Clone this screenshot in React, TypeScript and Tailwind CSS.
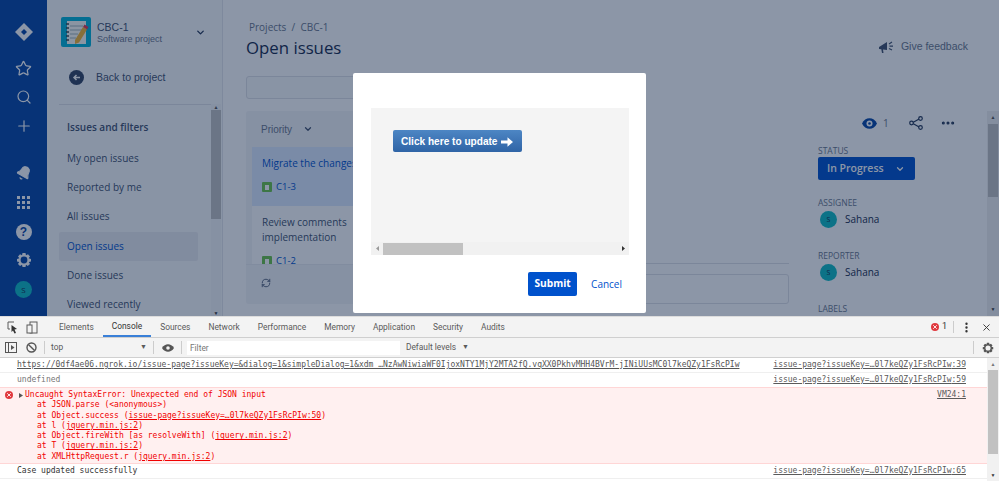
import { Bell, ChevronDown, Ellipsis, Plus, RefreshCw, Search, Star, X } from 'lucide-react';

const SANS = 'font-["Open_Sans","Noto_Sans",sans-serif]';
const ARIAL = 'font-["Liberation_Sans",Arial,sans-serif]';
const DEVTOOLS = 'font-["Roboto","Open_Sans",sans-serif]';

const NAV_LINKS = ['My open issues', 'Reported by me', 'All issues', 'Open issues', 'Done issues', 'Viewed recently'];
const TABS = ['Elements', 'Console', 'Sources', 'Network', 'Performance', 'Memory', 'Application', 'Security', 'Audits'];

function JiraLogo() {
  return (
    <svg width="20" height="20" viewBox="0 0 20 20">
      <path d="M10 1 L19 10 L10 19 L1 10 Z" fill="#ffffff" />
      <path d="M10 7 L13 10 L10 13 L7 10 Z" fill="#0747a6" />
    </svg>
  );
}

function Gear({ fill, hole }: { fill: string; hole: string }) {
  return (
    <svg width="16" height="16" viewBox="0 0 16 16">
      <path d="M6.5 1 H9.5 L10 3.2 L12 2.2 L14 4.5 L12.6 6.2 L15 7 V9.5 L12.8 10 L14 12 L11.8 14 L10 12.8 L9.5 15 H6.5 L6 12.8 L4 14 L2 12 L3.2 10 L1 9.5 V7 L3.4 6.2 L2 4.5 L4 2.2 L6 3.2 Z" fill={fill} />
      <circle cx="8" cy="8" r="3.4" fill={hole} />
    </svg>
  );
}

function Rail() {
  return (
    <div className="w-[47px] shrink-0 bg-[#0747a6] flex flex-col items-center text-white">
      <div className="mt-[22px]">
        <JiraLogo />
      </div>
      <Star size={17} strokeWidth={1.8} className="mt-[18px]" />
      <Search size={16} strokeWidth={1.8} className="mt-[12px]" />
      <Plus size={18} strokeWidth={1.6} className="mt-[12px]" />
      <Bell size={16} strokeWidth={1.5} fill="currentColor" className="mt-[30px] rotate-[30deg]" />
      <svg width="13" height="13" viewBox="0 0 13 13" className="mt-[15px]" fill="#ffffff">
        <rect x="0" y="0" width="3" height="3" />
        <rect x="5" y="0" width="3" height="3" />
        <rect x="10" y="0" width="3" height="3" />
        <rect x="0" y="5" width="3" height="3" />
        <rect x="5" y="5" width="3" height="3" />
        <rect x="10" y="5" width="3" height="3" />
        <rect x="0" y="10" width="3" height="3" />
        <rect x="5" y="10" width="3" height="3" />
        <rect x="10" y="10" width="3" height="3" />
      </svg>
      <div className={`mt-[15px] w-[16px] h-[16px] rounded-full bg-white text-[#0747a6] text-[12px] leading-[16px] font-bold text-center ${ARIAL}`}>?</div>
      <div className="mt-[12px] h-[16px]">
        <Gear fill="#ffffff" hole="#0747a6" />
      </div>
      <div className={`mt-[13px] w-[17px] h-[17px] rounded-full bg-[#10bcc4] text-[#172b4d] text-[8px] leading-[17px] text-center ${SANS}`}>S</div>
    </div>
  );
}

function ProjectIcon() {
  return (
    <svg width="30" height="30" viewBox="0 0 30 30" className="shrink-0 rounded-[2px]">
      <rect width="30" height="30" fill="#00b4d8" />
      <rect x="6" y="4" width="19" height="23" fill="#fdfdf5" />
      <path d="M9 9 H22 M9 13 H22 M9 17 H17 M9 21 H15" stroke="#9fb4b8" strokeWidth="1" />
      <path d="M5 7 H8 M5 11 H8 M5 15 H8 M5 19 H8 M5 23 H8" stroke="#37474f" strokeWidth="1.4" />
      <path d="M14 23 L22 10 L26 12.5 L18 25.5 L14 27 Z" fill="#f5b731" />
      <path d="M22 10 L23.5 7.5 L27.5 10 L26 12.5 Z" fill="#e53950" />
    </svg>
  );
}

function Sidebar() {
  return (
    <div className="w-[176px] shrink-0 bg-[#fafbfc] border-r border-[#e4e7ec] flex flex-col overflow-hidden">
      <div className={`flex items-center pl-[14px] pr-[16px] pt-[17px] ${ARIAL}`}>
        <ProjectIcon />
        <div className="ml-[6px] flex-1 pt-[2px]">
          <div className="text-[10.5px] leading-[11px] text-[#42526e]">CBC-1</div>
          <div className="text-[9px] leading-[12px] text-[#6b778c]">Software project</div>
        </div>
        <ChevronDown size={11} strokeWidth={3} className="text-[#253858]" />
      </div>
      <div className={`flex items-center pl-[22px] mt-[23px] ${ARIAL}`}>
        <div className="w-[15px] h-[15px] rounded-full bg-[#344563] flex items-center justify-center">
          <svg width="9" height="9" viewBox="0 0 9 9">
            <path d="M8 4.5 H2 M4.5 2 L2 4.5 L4.5 7" stroke="#ffffff" strokeWidth="1.5" fill="none" />
          </svg>
        </div>
        <span className="ml-[12px] text-[10.5px] text-[#42526e]">Back to project</span>
      </div>
      <div className="flex flex-1 min-h-0 mt-[18px] mr-[1px]">
        <div className="flex-1 min-w-0">
          <div className="ml-[12px] h-px bg-[#dfe1e6]" />
          <div className={`pl-[20px] pt-[15px] pb-[10px] text-[10px] leading-[14px] font-semibold text-[#42526e] ${SANS}`}>Issues and filters</div>
          <div className={`pl-[12px] pr-[13px] ${SANS}`}>
            {NAV_LINKS.map((link) => (
              <div
                key={link}
                className={`h-[29.3px] pl-[8px] flex items-center text-[10px] rounded-[2px] ${
                  link === 'Open issues' ? 'bg-[#ebecf0] text-[#0052cc]' : 'text-[#42526e]'
                }`}
              >
                {link}
              </div>
            ))}
          </div>
        </div>
        <div className="w-[10px] bg-[#f4f5f7] flex flex-col items-center">
          <div className="h-[6px] text-[5px] leading-[6px] text-[#555]">▲</div>
          <div className="w-full h-[109px] bg-[#c1c1c1]" />
          <div className="flex-1" />
          <div className="h-[6px] text-[5px] leading-[6px] text-[#333]">▼</div>
        </div>
      </div>
    </div>
  );
}

function IssueCard({ selected, title, issueKey }: { selected: boolean; title: string[]; issueKey: string }) {
  return (
    <div className={`pl-[10px] pr-[9px] pt-[9px] h-[59px] overflow-hidden ${selected ? 'bg-[#deebff]' : 'bg-white'} ${SANS}`}>
      {title.map((line) => (
        <div key={line} className={`text-[10px] leading-[15px] whitespace-nowrap ${selected ? 'text-[#0052cc]' : 'text-[#42526e]'}`}>
          {line}
        </div>
      ))}
      <div className="flex items-center mt-[10px]">
        <div className="w-[10px] h-[10px] rounded-[1px] bg-[#6bc44a] flex items-center justify-center">
          <div className="w-[4px] h-[5px] bg-white" />
        </div>
        <span className="ml-[4px] text-[9.5px] leading-[12px] text-[#0052cc]">{issueKey}</span>
      </div>
    </div>
  );
}

function PersonField({ label }: { label: string }) {
  return (
    <div className="h-[53px]">
      <div className={`text-[8.5px] leading-[11px] text-[#6b778c] ${SANS}`}>{label}</div>
      <div className="flex items-center mt-[3px] pl-[2px]">
        <div className={`w-[17px] h-[17px] rounded-full bg-[#10bcc4] text-[#172b4d] text-[7px] leading-[17px] text-center ${SANS}`}>S</div>
        <span className={`ml-[8px] text-[10px] text-[#172b4d] ${SANS}`}>Sahana</span>
      </div>
    </div>
  );
}

function JiraMain() {
  return (
    <div className="flex-1 min-w-0 flex flex-col">
      <div className="h-[111px] shrink-0 flex justify-between pl-[23px] pr-[31px]">
        <div>
          <div className={`pt-[20px] pl-[3px] text-[10px] leading-[14px] text-[#6b778c] ${SANS}`}>Projects&nbsp; /&nbsp; CBC-1</div>
          <h1 className={`text-[16.8px] leading-[24px] mt-[2px] text-[#172b4d] ${SANS}`}>Open issues</h1>
          <div className="w-[200px] h-[23px] mt-[16px] border border-[#dfe1e6] rounded-[3px] bg-[#fafbfc]" />
        </div>
        <div className={`flex items-center h-[20px] mt-[37px] ${ARIAL}`}>
          <svg width="16" height="14" viewBox="0 0 16 14">
            <path d="M1 7 L9 2 V10 L5 9.5 L5.5 13 L4 13 L3.3 9.2 L1 9 Z" fill="#42526e" />
            <path d="M11 4 L14 2 M11.5 6.2 H15 M11 8.5 L14 10" stroke="#42526e" strokeWidth="1.2" />
          </svg>
          <span className="ml-[7px] text-[10.5px] text-[#6b778c]">Give feedback</span>
        </div>
      </div>
      <div className="flex-1 min-h-0 flex pl-[23px]">
        <div className="w-[200px] h-[193px] shrink-0 bg-[#f4f5f7] rounded-[3px] flex flex-col">
          <div className={`h-[36px] pl-[15px] flex items-center text-[10px] text-[#6b778c] ${ARIAL}`}>
            Priority
            <ChevronDown size={10} strokeWidth={3} className="ml-[11px] text-[#42526e]" />
          </div>
          <div className="h-[117px] ml-[6px] overflow-hidden">
            <IssueCard selected title={['Migrate the changes']} issueKey="C1-3" />
            <IssueCard selected={false} title={['Review comments', 'implementation']} issueKey="C1-2" />
          </div>
          <div className="pl-[15px] pt-[13px] border-t border-[#ebecf0] text-[#42526e]">
            <RefreshCw size={10} strokeWidth={2} />
          </div>
        </div>
        <div className="flex-1 min-w-0 pt-[152px]">
          <div className="h-px bg-[#dfe1e6]" />
          <div className="h-[30px] mt-[10px] border border-[#dfe1e6] rounded-[3px]" />
        </div>
        <div className="w-[169px] shrink-0 ml-[29px]">
          <div className="h-[34px] flex items-center pl-[44px] pb-[10px]">
            <svg width="15" height="11" viewBox="0 0 15 11">
              <path d="M0 5.5 C3 -1.5 12 -1.5 15 5.5 C12 12.5 3 12.5 0 5.5 Z" fill="#0747a6" />
              <circle cx="7.5" cy="5.5" r="3" fill="#ffffff" />
              <circle cx="7.5" cy="5.5" r="1.3" fill="#0747a6" />
            </svg>
            <span className={`ml-[6px] text-[10px] text-[#6b778c] ${SANS}`}>1</span>
            <svg width="14" height="14" viewBox="0 0 14 14" className="ml-[20px]">
              <path d="M3 7 L11 2.5 M3 7 L11 11.5" stroke="#253858" strokeWidth="1.2" />
              <circle cx="2.5" cy="7" r="1.8" fill="#ffffff" stroke="#253858" strokeWidth="1.2" />
              <circle cx="11.5" cy="2.5" r="1.8" fill="#ffffff" stroke="#253858" strokeWidth="1.2" />
              <circle cx="11.5" cy="11.5" r="1.8" fill="#ffffff" stroke="#253858" strokeWidth="1.2" />
            </svg>
            <Ellipsis size={16} strokeWidth={2.6} className="ml-[17px] text-[#253858]" />
          </div>
          <div className={`text-[8.5px] leading-[11px] text-[#6b778c] ${SANS}`}>STATUS</div>
          <div className={`w-[97px] h-[23px] mt-[1px] mb-[17px] rounded-[2px] bg-[#0052cc] text-white flex items-center pl-[9px] text-[10.5px] font-semibold ${SANS}`}>
            In Progress
            <ChevronDown size={10} strokeWidth={3} className="ml-[11px]" />
          </div>
          <PersonField label="ASSIGNEE" />
          <PersonField label="REPORTER" />
          <div className={`text-[8.5px] leading-[11px] text-[#6b778c] ${SANS}`}>LABELS</div>
        </div>
        <div className="w-[12px] shrink-0 bg-[#f1f1f1] flex flex-col items-center">
          <div className="h-[13px] text-[5px] leading-[13px] text-[#555]">▲</div>
          <div className="w-[10px] h-[73px] bg-[#c1c1c1]" />
          <div className="flex-1" />
          <div className="h-[13px] text-[5px] leading-[13px] text-[#333]">▼</div>
        </div>
      </div>
    </div>
  );
}

function Dialog() {
  return (
    <div className="absolute left-[353px] top-[73px] w-[293px] h-[240px] bg-white rounded-[2px] pt-[35px] pl-[18px] pr-[17px]">
      <div className="h-[147px] bg-[#f4f4f4] flex flex-col">
        <div className="flex-1 pt-[22px] pl-[22px]">
          <div className={`w-[129px] h-[22px] pt-[1px] rounded-[2px] bg-gradient-to-b from-[#4d86c4] to-[#2f64a6] text-white flex items-center pl-[8px] text-[10.1px] font-bold ${ARIAL}`}>
            Click here to update
            <svg width="12" height="10" viewBox="0 0 12 10" className="ml-[4px]">
              <path d="M0 3.4 H6.5 V0.2 L12 5 L6.5 9.8 V6.6 H0 Z" fill="#ffffff" />
            </svg>
          </div>
        </div>
        <div className="h-[13px] bg-[#f1f1f1] flex items-center">
          <div className="w-[12px] flex justify-center">
            <svg width="3" height="5" viewBox="0 0 3 5">
              <path d="M3 0 V5 L0 2.5 Z" fill="#9a9a9a" />
            </svg>
          </div>
          <div className="w-[80px] h-[12px] bg-[#c1c1c1]" />
          <div className="flex-1" />
          <div className="w-[12px] flex justify-center">
            <svg width="3" height="5" viewBox="0 0 3 5">
              <path d="M0 0 V5 L3 2.5 Z" fill="#333333" />
            </svg>
          </div>
        </div>
      </div>
      <div className="flex items-center justify-end mt-[17px] pr-[7px]">
        <div className={`w-[49px] h-[24px] rounded-[2px] bg-[#0052cc] text-white text-[10.2px] font-bold flex items-center justify-center ${SANS}`}>Submit</div>
        <div className={`ml-[14px] text-[10px] pt-[1px] text-[#0052cc] ${SANS}`}>Cancel</div>
      </div>
    </div>
  );
}

function DevToolsBars() {
  return (
    <>
      <div className={`h-[21px] bg-[#f3f3f3] border-b border-[#cfcfcf] flex items-stretch text-[#5a5a5a] ${DEVTOOLS}`}>
        <div className="w-[50px] shrink-0 flex items-center pl-[7px]">
          <svg width="11" height="13" viewBox="0 0 11 13" fill="none" stroke="#5a5a5a" strokeWidth="1">
            <path d="M7 1 H1 V8 H3" />
            <path d="M4.5 4 L10 8 L7.5 8.5 L9 12 L7.5 12.5 L6 9.5 L4.5 11 Z" fill="#333333" stroke="none" />
          </svg>
          <svg width="12" height="13" viewBox="0 0 12 13" fill="none" stroke="#5a5a5a" strokeWidth="1" className="ml-[8px]">
            <rect x="4" y="1" width="7" height="11" />
            <rect x="1" y="4" width="5" height="8" fill="#f3f3f3" />
          </svg>
        </div>
        {TABS.map((tab) => (
          <div
            key={tab}
            className={`px-[9px] flex items-center text-[8.4px] ${tab === 'Console' ? 'border-b-2 border-[#3a80d8] text-[#333]' : ''}`}
          >
            {tab}
          </div>
        ))}
        <div className="flex-1" />
        <div className="flex items-center pr-[7px] text-[#333]">
          <div className="w-[8px] h-[8px] rounded-full bg-[#e0393e] text-white flex items-center justify-center">
            <X size={6} strokeWidth={3.5} />
          </div>
          <span className="ml-[3px] text-[9px]">1</span>
          <div className="ml-[6px] w-px h-[12px] bg-[#ccc]" />
          <Ellipsis size={13} strokeWidth={2.4} className="ml-[6px] rotate-90" />
          <X size={11} strokeWidth={2} className="ml-[8px]" />
        </div>
      </div>
      <div className={`h-[20px] bg-[#f3f3f3] border-b border-[#d0d0d0] flex items-center text-[#5a5a5a] text-[8.4px] ${DEVTOOLS}`}>
        <svg width="12" height="11" viewBox="0 0 12 11" className="ml-[5px]" fill="none" stroke="#555555">
          <rect x="0.5" y="0.5" width="11" height="10" />
          <path d="M3.5 1 V10" />
          <path d="M6 3 L9.5 5.5 L6 8 Z" fill="#555555" stroke="none" />
        </svg>
        <svg width="11" height="11" viewBox="0 0 11 11" className="ml-[9px]" fill="none" stroke="#555555" strokeWidth="1.4">
          <circle cx="5.5" cy="5.5" r="4.5" />
          <path d="M2.4 2.4 L8.6 8.6" />
        </svg>
        <div className="ml-[7px] w-px h-[13px] bg-[#ccc]" />
        <span className="ml-[6px] w-[89px]">top</span>
        <span className="text-[7px]">▼</span>
        <div className="ml-[6px] w-px h-[13px] bg-[#ccc]" />
        <svg width="12" height="8" viewBox="0 0 12 8" className="ml-[8px]">
          <path d="M0 4 C3 -1 9 -1 12 4 C9 9 3 9 0 4 Z" fill="#555555" />
          <circle cx="6" cy="4" r="1.8" fill="#f3f3f3" />
        </svg>
        <div className="ml-[7px] w-px h-[13px] bg-[#ccc]" />
        <div className="ml-[5px] w-[213px] h-[14px] bg-white pl-[3px] leading-[15px] text-[#777]">Filter</div>
        <span className="ml-[6px]">Default levels</span>
        <span className="ml-[6px] text-[7px]">▼</span>
        <div className="flex-1" />
        <div className="w-px h-[13px] bg-[#ccc]" />
        <div className="ml-[8px] mr-[5px] w-[12px] h-[12px] [&>svg]:w-[12px] [&>svg]:h-[12px]">
          <Gear fill="#555555" hole="#f3f3f3" />
        </div>
      </div>
    </>
  );
}

function Console() {
  const src = 'issue-page?issueKey=…0l7keQZy1FsRcPIw';
  return (
    <div className="flex-1 min-h-0 flex bg-white">
      <div className={`flex-1 min-w-0 text-[8px] leading-[10.3px] whitespace-nowrap font-["DejaVu_Sans_Mono",monospace]`}>
        <div className="h-[14.5px] border-b border-[#efefef] flex items-center pl-[17px] pr-[21px] justify-between">
          <span className="text-[#555] underline">
            https://0df4ae06.ngrok.io/issue-page?issueKey=&amp;dialog=1&amp;simpleDialog=1&amp;xdm_…NzAwNiwiaWF0IjoxNTY1MjY2MTA2fQ.vqXX0PkhvMHH4BVrM-jINiUUsMC0l7keQZy1FsRcPIw
          </span>
          <span className="text-[#5a5a5a] underline">{src}:39</span>
        </div>
        <div className="h-[14.5px] flex items-center pl-[17px] pr-[21px] justify-between">
          <span className="text-[#777]">undefined</span>
          <span className="text-[#5a5a5a] underline">{src}:59</span>
        </div>
        <div className="h-[77px] bg-[#fff0f0] border-y border-[#ffd6d6] flex pr-[21px] pt-[2px] text-[#f00000]">
          <div className="w-[25px] shrink-0 flex items-start pl-[5px] pt-[1px]">
            <div className="w-[8px] h-[8px] rounded-full bg-[#e0393e] text-white flex items-center justify-center">
              <X size={6} strokeWidth={3.5} />
            </div>
            <svg width="4" height="5" viewBox="0 0 4 5" className="ml-[6px] mt-[2px]">
              <path d="M0 0 L4 2.5 L0 5 Z" fill="#555555" />
            </svg>
          </div>
          <div className="flex-1 min-w-0">
            <div>Uncaught SyntaxError: Unexpected end of JSON input</div>
            <div className="pl-[12px]">at JSON.parse (&lt;anonymous&gt;)</div>
            <div className="pl-[12px]">at Object.success (<span className="underline">issue-page?issueKey=…0l7keQZy1FsRcPIw:50</span>)</div>
            <div className="pl-[12px]">at l (<span className="underline">jquery.min.js:2</span>)</div>
            <div className="pl-[12px]">at Object.fireWith [as resolveWith] (<span className="underline">jquery.min.js:2</span>)</div>
            <div className="pl-[12px]">at T (<span className="underline">jquery.min.js:2</span>)</div>
            <div className="pl-[12px]">at XMLHttpRequest.r (<span className="underline">jquery.min.js:2</span>)</div>
          </div>
          <span className="underline text-[#5a5a5a]">VM24:1</span>
        </div>
        <div className="h-[14.5px] border-b border-[#efefef] flex items-center pl-[17px] pr-[21px] justify-between">
          <span className="text-[#333]">Case updated successfully</span>
          <span className="text-[#5a5a5a] underline">{src}:65</span>
        </div>
      </div>
      <div className="w-[12px] shrink-0 bg-[#f1f1f1] flex flex-col items-center">
        <div className="h-[12px] text-[5px] leading-[12px] text-[#777]">▲</div>
        <div className="w-[10px] h-[84px] bg-[#c1c1c1]" />
        <div className="flex-1" />
        <div className="h-[12px] text-[5px] leading-[12px] text-[#333]">▼</div>
      </div>
    </div>
  );
}

export default function App() {
  return (
    <div className="w-[999px] h-[481px] overflow-hidden flex flex-col bg-white">
      <div className="relative h-[316px] shrink-0 flex bg-white overflow-hidden">
        <Rail />
        <Sidebar />
        <JiraMain />
        <div className="absolute inset-0 bg-[#091e42]/[0.467]" />
        <Dialog />
      </div>
      <div className="flex-1 min-h-0 flex flex-col border-t border-[#dcdcdc]">
        <DevToolsBars />
        <Console />
      </div>
    </div>
  );
}
